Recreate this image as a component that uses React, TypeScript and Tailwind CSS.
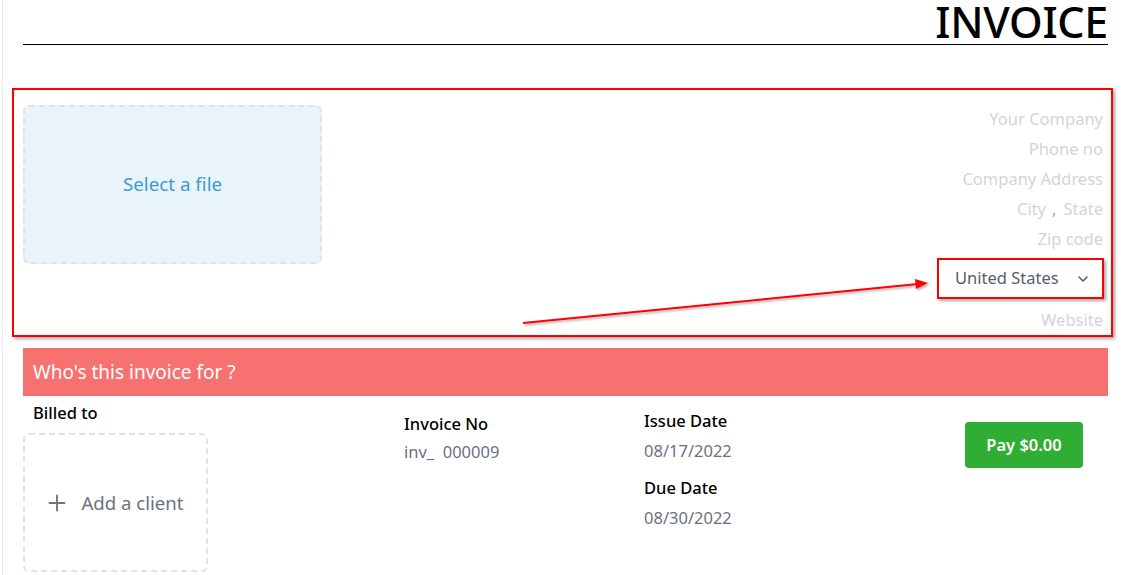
import React from "react";

export default function App() {
  const font = { fontFamily: '"Noto Sans", "Open Sans", sans-serif' };
  return (
    <div className="relative h-[575px] w-[1128px] overflow-hidden bg-white" style={font}>
      <div className="ml-[2px] h-full border-l border-[#e2eaef] pl-[20px] pr-[20px]">
        {/* Header */}
        <div className="flex h-[45px] justify-end border-b-[1.5px] border-black">
          <h1 className="text-[43px] font-medium leading-[44px] tracking-[-0.3px] text-black">INVOICE</h1>
        </div>

        {/* Company box (annotated) */}
        <div className="ml-[-11px] mr-[-5px] mt-[43px] flex h-[249px] justify-between border-2 border-[#ff0000] pl-[9px] pr-[8px] pt-[14px] shadow-[2px_2px_3px_rgba(0,0,0,0.35)]">
          <div className="mt-[1px] flex h-[159px] w-[299px] items-center justify-center rounded-md border-2 border-dashed border-[#dfe3e8] bg-[#e9f4fa]">
            <span className="text-[18.8px] text-[#3b9bd2]">Select a file</span>
          </div>
          <div className="flex flex-col items-end text-[16.5px] text-[#d1d5db]">
            <div className="h-[30px] leading-[30px]">Your Company</div>
            <div className="h-[30px] leading-[30px]">Phone no</div>
            <div className="h-[30px] leading-[30px]">Company Address</div>
            <div className="h-[30px] leading-[30px]">City<span className="ml-[6px] mr-[7px] text-[#9ca3af]">,</span>State</div>
            <div className="h-[30px] leading-[30px]">Zip code</div>
            <div className="mr-[-1px] mt-[4px] flex h-[41px] w-[167px] items-center justify-between border-2 border-[#ff0000] pl-[16px] pr-[11px] shadow-[2px_2px_3px_rgba(0,0,0,0.35)]">
              <span className="text-[#555d6b]">United States</span>
              <svg width="16" height="16" viewBox="0 0 24 24" fill="none" stroke="#4b5563" strokeWidth="2.2" strokeLinecap="round" strokeLinejoin="round">
                <path d="M6 9l6 6 6-6" />
              </svg>
            </div>
            <div className="mt-[6px] h-[30px] leading-[30px]">Website</div>
          </div>
        </div>

        {/* Banner */}
        <div className="mt-[11px] flex h-[48px] items-center bg-[#f87171] pl-[10px] text-[19px] text-white">
          Who's this invoice for ?
        </div>

        {/* Details */}
        <div className="flex">
          <div className="w-[381px]">
            <div className="pl-[10px] pt-[4px] text-[16.5px] font-medium leading-[26px] text-black">Billed to</div>
            <div className="mt-[7px] flex h-[139px] w-[185px] items-center justify-center gap-[14px] rounded-md border-2 border-dashed border-[#e0e3e8] text-[18.6px] text-[#6b7280]">
              <svg width="20" height="20" viewBox="0 0 24 24" fill="none" stroke="#6b7280" strokeWidth="2.2" strokeLinecap="round">
                <path d="M12 3v18M3 12h18" />
              </svg>
              <span>Add a client</span>
            </div>
          </div>
          <div className="w-[240px] pt-[15px]">
            <div className="text-[16.5px] font-medium leading-[26px] text-black">Invoice No</div>
            <div className="mt-[1px] text-[16.5px] leading-[28px] text-[#6b7280]">inv_&nbsp; 000009</div>
          </div>
          <div className="w-[321px] pt-[12px]">
            <div className="text-[16.5px] font-medium leading-[26px] text-black">Issue Date</div>
            <div className="mt-[2px] text-[16.5px] leading-[30px] text-[#6b7280]">08/17/2022</div>
            <div className="mt-[9px] text-[16.5px] font-medium leading-[26px] text-black">Due Date</div>
            <div className="mt-[2px] text-[16.5px] leading-[30px] text-[#6b7280]">08/30/2022</div>
          </div>
          <div className="pt-[26px]">
            <button className="h-[46px] w-[118px] rounded-[4px] bg-[#2fae33] text-[16.5px] font-semibold text-white">
              Pay $0.00
            </button>
          </div>
        </div>
      </div>

      {/* Annotation arrow */}
      <svg className="pointer-events-none absolute left-0 top-0" width="1128" height="575">
        <defs>
          <filter id="sh" x="-5%" y="-50%" width="110%" height="200%">
            <feDropShadow dx="1.5" dy="1.5" stdDeviation="1" floodColor="#000" floodOpacity="0.35" />
          </filter>
        </defs>
        <g filter="url(#sh)">
          <line x1="523" y1="323" x2="918" y2="284" stroke="#ff0000" strokeWidth="2" />
          <path d="M928 283 L915 279 L916 289 Z" fill="#ff0000" />
        </g>
      </svg>
    </div>
  );
}
